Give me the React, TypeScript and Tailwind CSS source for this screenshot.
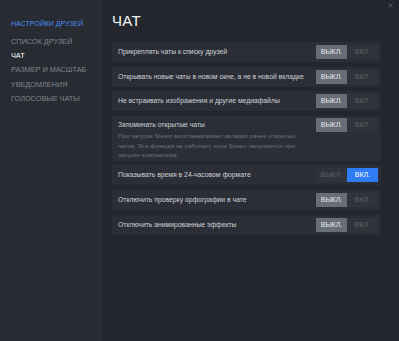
import { X } from 'lucide-react';

const rows = [
  { label: 'Прикреплять чаты к списку друзей', on: false },
  { label: 'Открывать новые чаты в новом окне, а не в новой вкладке', on: false },
  { label: 'Не встраивать изображения и другие медиафайлы', on: false },
  {
    label: 'Запоминать открытые чаты',
    on: false,
    desc: 'При запуске Steam восстанавливает вкладки ранее открытых чатов. Эта функция не работает, если Steam запускается при запуске компьютера.',
  },
  { label: 'Показывать время в 24-часовом формате', on: true },
  { label: 'Отключить проверку орфографии в чате', on: false },
  { label: 'Отключить анимированные эффекты', on: false },
];

const nav = ['СПИСОК ДРУЗЕЙ', 'ЧАТ', 'РАЗМЕР И МАСШТАБ', 'УВЕДОМЛЕНИЯ', 'ГОЛОСОВЫЕ ЧАТЫ'];

function Toggle({ on }: { on: boolean }) {
  return (
    <div className="flex h-[14px] shrink-0 text-[7px] leading-[14px]">
      <div
        className={`w-[31px] text-center ${on ? 'bg-[#30333a] text-[#5f636b]' : 'bg-[#676e79] text-[#e8eaed]'}`}
      >
        ВЫКЛ.
      </div>
      <div
        className={`w-[31px] text-center ${on ? 'bg-[#2f7cf6] text-white' : 'bg-[#30333a] text-[#5f636b]'}`}
      >
        ВКЛ.
      </div>
    </div>
  );
}

export default function App() {
  return (
    <div
      className="flex h-[341px] w-[399px] bg-[#23262e] text-white"
      style={{ fontFamily: '"Liberation Sans", Arial, sans-serif' }}
    >
      <div className="w-[101px] shrink-0 border-r border-[#2e3139] bg-[#282b32] pl-[11px] pt-[20px]">
        <div className="text-[7px] leading-[8px] text-[#4c8bf0]">НАСТРОЙКИ ДРУЗЕЙ</div>
        <div className="mt-[7px] flex flex-col">
          {nav.map((n) => (
            <div
              key={n}
              className={`h-[14.2px] text-[7.3px] leading-[14.2px] ${n === 'ЧАТ' ? 'text-white' : 'text-[#80848c]'}`}
            >
              {n}
            </div>
          ))}
        </div>
      </div>

      <div className="relative flex-1 pl-[11px] pr-[18px] pt-[12px]">
        <X className="absolute right-[5px] top-[2px] h-[7px] w-[7px] text-[#8a8e95]" strokeWidth={2} />
        <h1 className="text-[15px] leading-[18px] tracking-[0.3px] text-[#f2f3f5]">ЧАТ</h1>
        <div className="mt-[12px] flex flex-col gap-[4.7px]">
          {rows.map((r) => (
            <div
              key={r.label}
              className={`flex justify-between bg-[#2b2e36] pl-[6px] pr-[3px] ${r.desc ? 'pb-[1px] pt-[2px]' : 'h-[20px] items-center'}`}
            >
              <div className="min-w-0">
                <div className={`text-[6.8px] text-[#cfd2d6] ${r.desc ? 'leading-[13px]' : 'leading-[20px]'}`}>
                  {r.label}
                </div>
                {r.desc && (
                  <div className="w-[186px] text-[6.2px] leading-[9.5px] text-[#6e727a]">{r.desc}</div>
                )}
              </div>
              <Toggle on={r.on} />
            </div>
          ))}
        </div>
      </div>
    </div>
  );
}
